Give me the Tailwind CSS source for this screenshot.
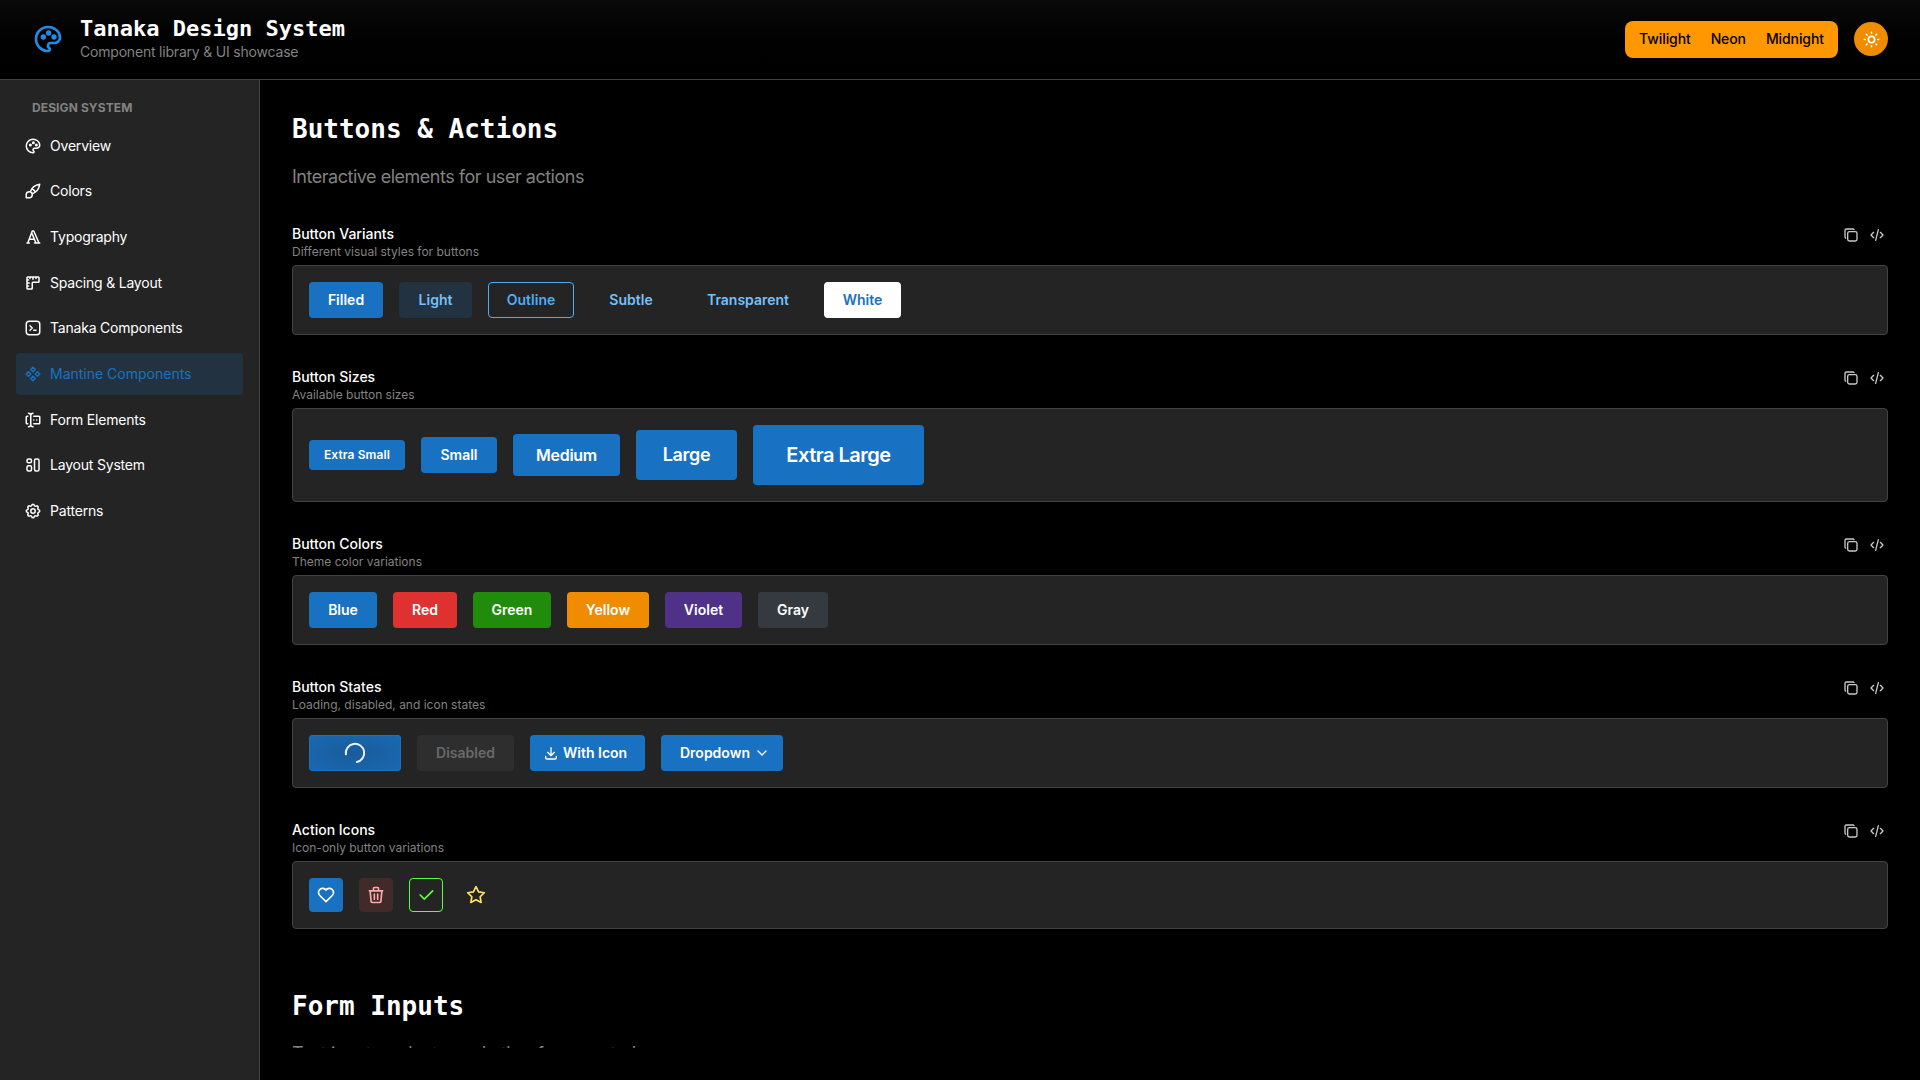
<!DOCTYPE html>
<html lang="en">
<head>
<meta charset="utf-8">
<title>Tanaka Design System</title>
<script src="https://cdn.jsdelivr.net/npm/@tailwindcss/browser@4"></script>
</head>
<body class="h-screen overflow-hidden bg-black text-white font-['Inter',sans-serif] antialiased">
<svg class="hidden">
  <defs>
    <symbol id="palette" viewBox="0 0 24 24"><path d="M12 21a9 9 0 0 1 0 -18c4.97 0 9 3.582 9 8c0 1.06 -.474 2.078 -1.318 2.828c-.844 .75 -1.989 1.172 -3.182 1.172h-2.5a2 2 0 0 0 -1 3.75a1.3 1.3 0 0 1 -1 2.25"/><path d="M7.5 10.5a1 1 0 1 0 2 0a1 1 0 1 0 -2 0M11.500 7.5a1 1 0 1 0 2 0a1 1 0 1 0 -2 0M15.500 10.5a1 1 0 1 0 2 0a1 1 0 1 0 -2 0"/></symbol>
    <symbol id="brush" viewBox="0 0 24 24"><path d="M3 21v-4a4 4 0 1 1 4 4h-4M21 3a16 16 0 0 0 -12.8 10.2M21 3a16 16 0 0 1 -10.2 12.8M10.6 9a9 9 0 0 1 4.4 4.4"/></symbol>
    <symbol id="typography" viewBox="0 0 24 24"><path d="M4 20h3M14 20h7M6.900 15h6.900M10.200 6.300l5.800 13.700M5 20l6 -16h2l7 16"/></symbol>
    <symbol id="ruler" viewBox="0 0 24 24"><path d="M5 4h14a1 1 0 0 1 1 1v5a1 1 0 0 1 -1 1h-7a1 1 0 0 0 -1 1v7a1 1 0 0 1 -1 1h-5a1 1 0 0 1 -1 -1v-14a1 1 0 0 1 1 -1M4 8h2M4 12h3M4 16h2M8 4v2M12 4v3M16 4v2"/></symbol>
    <symbol id="terminal" viewBox="0 0 24 24"><path d="M7 3h10a4 4 0 0 1 4 4v10a4 4 0 0 1 -4 4h-10a4 4 0 0 1 -4 -4v-10a4 4 0 0 1 4 -4zM8 9l3 3l-3 3M13 15h3"/></symbol>
    <symbol id="components" viewBox="0 0 24 24"><path d="M3 12l3 3l3 -3l-3 -3zM15 12l3 3l3 -3l-3 -3zM9 6l3 3l3 -3l-3 -3zM9 18l3 3l3 -3l-3 -3z"/></symbol>
    <symbol id="forms" viewBox="0 0 24 24"><path d="M12 3a3 3 0 0 0 -3 3v12a3 3 0 0 0 3 3M6 3a3 3 0 0 1 3 3v12a3 3 0 0 1 -3 3M13 7h7a1 1 0 0 1 1 1v8a1 1 0 0 1 -1 1h-7M5 7h-1a1 1 0 0 0 -1 1v8a1 1 0 0 0 1 1h1M17 12h.01M13 12h.01"/></symbol>
    <symbol id="layout" viewBox="0 0 24 24"><path d="M4 6a2 2 0 0 1 2 -2h2a2 2 0 0 1 2 2v1a2 2 0 0 1 -2 2h-2a2 2 0 0 1 -2 -2zM4 15a2 2 0 0 1 2 -2h2a2 2 0 0 1 2 2v3a2 2 0 0 1 -2 2h-2a2 2 0 0 1 -2 -2zM14 6a2 2 0 0 1 2 -2h2a2 2 0 0 1 2 2v12a2 2 0 0 1 -2 2h-2a2 2 0 0 1 -2 -2z"/></symbol>
    <symbol id="settings" viewBox="0 0 24 24"><path d="M10.325 4.317c.426 -1.756 2.924 -1.756 3.350 0a1.724 1.724 0 0 0 2.573 1.066c1.543 -.94 3.310 .826 2.370 2.370a1.724 1.724 0 0 0 1.065 2.572c1.756 .426 1.756 2.924 0 3.350a1.724 1.724 0 0 0 -1.066 2.573c.94 1.543 -.826 3.310 -2.370 2.370a1.724 1.724 0 0 0 -2.572 1.065c-.426 1.756 -2.924 1.756 -3.350 0a1.724 1.724 0 0 0 -2.573 -1.066c-1.543 .94 -3.310 -.826 -2.370 -2.370a1.724 1.724 0 0 0 -1.065 -2.572c-1.756 -.426 -1.756 -2.924 0 -3.350a1.724 1.724 0 0 0 1.066 -2.573c-.94 -1.543 .826 -3.310 2.370 -2.370c1 .608 2.296 .07 2.572 -1.065z"/><path d="M9 12a3 3 0 1 0 6 0a3 3 0 0 0 -6 0"/></symbol>
    <symbol id="sun" viewBox="0 0 24 24"><path d="M8 12a4 4 0 1 0 8 0a4 4 0 1 0 -8 0M3 12h1M12 3v1M20 12h1M12 20v1M5.600 5.600l.7 .7M18.400 5.600l-.7 .7M17.700 17.700l.7 .7M6.300 17.700l-.7 .7"/></symbol>
    <symbol id="copy" viewBox="0 0 24 24"><path d="M7 9.667a2.667 2.667 0 0 1 2.667 -2.667h8.666a2.667 2.667 0 0 1 2.667 2.667v8.666a2.667 2.667 0 0 1 -2.667 2.667h-8.666a2.667 2.667 0 0 1 -2.667 -2.667zM4.012 16.737a2.005 2.005 0 0 1 -1.012 -1.737v-10c0 -1.100 .9 -2 2 -2h10c.75 0 1.158 .385 1.500 1"/></symbol>
    <symbol id="code" viewBox="0 0 24 24"><path d="M7 8l-4 4l4 4M17 8l4 4l-4 4M14 4l-4 16"/></symbol>
    <symbol id="download" viewBox="0 0 24 24"><path d="M4 17v2a2 2 0 0 0 2 2h12a2 2 0 0 0 2 -2v-2M7 11l5 5l5 -5M12 4v12"/></symbol>
    <symbol id="chevron" viewBox="0 0 24 24"><path d="M6 9l6 6l6 -6"/></symbol>
    <symbol id="heart" viewBox="0 0 24 24"><path d="M19.500 12.572l-7.500 7.428l-7.500 -7.428a5 5 0 1 1 7.500 -6.566a5 5 0 1 1 7.500 6.572"/></symbol>
    <symbol id="trash" viewBox="0 0 24 24"><path d="M4 7h16M10 11v6M14 11v6M5 7l1 12a2 2 0 0 0 2 2h8a2 2 0 0 0 2 -2l1 -12M9 7v-3a1 1 0 0 1 1 -1h4a1 1 0 0 1 1 1v3"/></symbol>
    <symbol id="check" viewBox="0 0 24 24"><path d="M5 12l5 5l10 -10"/></symbol>
    <symbol id="star" viewBox="0 0 24 24"><path d="M12 17.750l-6.172 3.245l1.179 -6.873l-5 -4.867l6.900 -1l3.086 -6.253l3.086 6.253l6.900 1l-5 4.867l1.179 6.873z"/></symbol>
  </defs>
</svg>

<div class="flex h-full flex-col">
  <header class="flex h-20 shrink-0 items-center justify-between border-b border-[#424242] bg-linear-to-b from-[#0b0b0b] to-black px-8 pb-px">
    <div class="flex items-center gap-4">
      <svg class="size-8 fill-none stroke-[#228be6] stroke-2 [stroke-linecap:round] [stroke-linejoin:round]"><use href="#palette"/></svg>
      <div>
        <h1 class="font-['DejaVu_Sans_Mono',monospace] text-[22px] leading-[27px] font-bold">Tanaka Design System</h1>
        <p class="pb-px text-sm leading-[20px] tracking-[-0.2px] text-[#828282]">Component library &amp; UI showcase</p>
      </div>
    </div>
    <div class="flex items-center gap-4">
      <div class="flex h-[37px] w-[213px] items-center justify-center rounded-lg bg-[#ff9800] text-sm font-medium tracking-[-0.1px] text-black">
        <span class="px-[10px]">Twilight</span><span class="px-[10px]">Neon</span><span class="px-[10px]">Midnight</span>
      </div>
      <button class="grid size-[34px] place-items-center rounded-full bg-[#f08c00]"><svg class="size-[19px] fill-none stroke-white stroke-2 [stroke-linecap:round] [stroke-linejoin:round]"><use href="#sun"/></svg></button>
    </div>
  </header>

  <div class="flex min-h-0 flex-1">
    <aside class="w-[260px] shrink-0 border-r border-[#424242] bg-[#242424] p-4">
      <p class="h-[28.700px] px-4 pt-[2px] text-xs leading-[19px] font-bold tracking-[0.1px] text-[#828282]">DESIGN SYSTEM</p>
      <nav class="flex flex-col gap-1 text-sm tracking-[-0.2px] *:flex *:h-[41.700px] *:items-center *:gap-2 *:rounded *:px-2 [&_svg]:size-[18px] [&_svg]:fill-none [&_svg]:stroke-current [&_svg]:stroke-2 [&_svg]:[stroke-linecap:round] [&_svg]:[stroke-linejoin:round]">
        <a><svg><use href="#palette"/></svg>Overview</a>
        <a><svg><use href="#brush"/></svg>Colors</a>
        <a><svg><use href="#typography"/></svg>Typography</a>
        <a><svg><use href="#ruler"/></svg>Spacing &amp; Layout</a>
        <a><svg><use href="#terminal"/></svg>Tanaka Components</a>
        <a class="bg-[#233240] tracking-normal text-[#1971c2]"><svg><use href="#components"/></svg>Mantine Components</a>
        <a><svg><use href="#forms"/></svg>Form Elements</a>
        <a><svg><use href="#layout"/></svg>Layout System</a>
        <a><svg><use href="#settings"/></svg>Patterns</a>
      </nav>
    </aside>

    <main class="min-w-0 flex-1 p-8">
      <div class="h-full overflow-hidden">
        <h2 class="h-[35px] font-['DejaVu_Sans_Mono',monospace] text-[26px] leading-[35px] font-bold">Buttons &amp; Actions</h2>
        <p class="mt-[15px] mb-px h-[29px] text-lg leading-[29px] tracking-[-0.480px] text-[#828282]">Interactive elements for user actions</p>

        <div id="sections"></div>

        <h2 class="mt-[60px] h-[35px] font-['DejaVu_Sans_Mono',monospace] text-[26px] leading-[35px] font-bold">Form Inputs</h2>
        <p class="mt-[15px] h-[29px] text-lg leading-[29px] tracking-[-0.480px] text-[#828282]">Text inputs, selects, and other form controls</p>
      </div>
    </main>
  </div>
</div>

<template id="bodies">
  <div data-title="Button Variants" data-sub="Different visual styles for buttons">
    <button class="h-9 w-[74px] rounded bg-[#1971c2]">Filled</button>
    <button class="h-9 w-[73px] rounded bg-[#233240] text-[#74c0fc]">Light</button>
    <button class="h-9 w-[86px] rounded border border-[#4dabf7] text-[#4dabf7]">Outline</button>
    <button class="h-9 w-[82px] rounded text-[#74c0fc]">Subtle</button>
    <button class="h-9 w-[120px] rounded text-[#74c0fc]">Transparent</button>
    <button class="h-9 w-[77px] rounded bg-white text-[#1971c2]">White</button>
  </div>
  <div data-title="Button Sizes" data-sub="Available button sizes">
    <button class="h-[30px] w-24 rounded bg-[#1971c2] text-xs tracking-[0.1px]">Extra Small</button>
    <button class="h-9 w-[76px] rounded bg-[#1971c2]">Small</button>
    <button class="h-[42px] w-[107px] rounded bg-[#1971c2] text-base tracking-[-0.3px]">Medium</button>
    <button class="h-[50px] w-[101px] rounded bg-[#1971c2] text-lg tracking-[-0.350px]">Large</button>
    <button class="h-[60px] w-[171px] rounded bg-[#1971c2] text-xl tracking-[-0.5px]">Extra Large</button>
  </div>
  <div data-title="Button Colors" data-sub="Theme color variations">
    <button class="h-9 w-[68px] rounded bg-[#1971c2]">Blue</button>
    <button class="h-9 w-[64px] rounded bg-[#e03131]">Red</button>
    <button class="h-9 w-[78px] rounded bg-[#218c0c]">Green</button>
    <button class="h-9 w-[82px] rounded bg-[#f08c00]">Yellow</button>
    <button class="h-9 w-[77px] rounded bg-[#4f3288]">Violet</button>
    <button class="h-9 w-[70px] rounded bg-[#343a40]">Gray</button>
  </div>
  <div data-title="Button States" data-sub="Loading, disabled, and icon states">
    <button class="grid h-9 w-[92px] place-items-center rounded bg-radial from-[#195c9b] to-[#1969b3] inset-ring inset-ring-[#1971c2]"><svg class="size-[22px] fill-none stroke-[#e8f1f9] stroke-2 [stroke-linecap:round]" viewBox="0 0 22 22"><path d="M1.900 12.300A9.200 9.200 0 1 1 12.800 20"/></svg></button>
    <button class="h-9 w-[97px] rounded bg-[#2e2e2e] text-[#696969]">Disabled</button>
    <button class="flex h-9 w-[115px] items-center gap-1 rounded bg-[#1971c2] pl-[13px] whitespace-nowrap"><svg class="size-4 shrink-0 fill-none stroke-white stroke-2 [stroke-linecap:round] [stroke-linejoin:round]"><use href="#download"/></svg>With Icon</button>
    <button class="flex h-9 w-[122px] items-center justify-between rounded bg-[#1971c2] pr-[13px] pl-[19px] whitespace-nowrap">Dropdown<svg class="size-4 shrink-0 fill-none stroke-white stroke-2 [stroke-linecap:round] [stroke-linejoin:round]"><use href="#chevron"/></svg></button>
  </div>
  <div data-title="Action Icons" data-sub="Icon-only button variations">
    <button class="grid size-[34px] place-items-center rounded bg-[#1971c2]"><svg class="size-5 fill-none stroke-white stroke-2 [stroke-linecap:round] [stroke-linejoin:round]"><use href="#heart"/></svg></button>
    <button class="grid size-[34px] place-items-center rounded bg-[#412a2a]"><svg class="size-5 fill-none stroke-[#ffa8a8] stroke-2 [stroke-linecap:round] [stroke-linejoin:round]"><use href="#trash"/></svg></button>
    <button class="grid size-[34px] place-items-center rounded border border-[#5cff3b]"><svg class="size-5 fill-none stroke-[#5cff3b] stroke-2 [stroke-linecap:round] [stroke-linejoin:round]"><use href="#check"/></svg></button>
    <button class="grid size-[34px] place-items-center rounded"><svg class="size-5 fill-none stroke-[#ffe066] stroke-2 [stroke-linecap:round] [stroke-linejoin:round]"><use href="#star"/></svg></button>
  </div>
</template>
<script>
const root = document.getElementById('sections');
for (const b of [...document.getElementById('bodies').content.children]) {
  const s = document.createElement('section');
  s.innerHTML = `<div class="flex h-[73px] items-start justify-between pt-[31px]">
      <div><h3 class="text-sm leading-[22px] font-medium">${b.dataset.title}</h3><p class="-mt-[2px] text-xs leading-[18px] text-[#828282]">${b.dataset.sub}</p></div>
      <div class="flex gap-1 pt-[1px] [&_svg]:size-4 [&_svg]:fill-none [&_svg]:stroke-[#c9c9c9] [&_svg]:stroke-2 [&_svg]:[stroke-linecap:round] [&_svg]:[stroke-linejoin:round]">
        <button class="grid size-[22px] place-items-center"><svg><use href="#copy"/></svg></button>
        <button class="grid size-[22px] place-items-center"><svg><use href="#code"/></svg></button>
      </div></div>`;
  b.className = 'flex items-center gap-4 rounded border border-[#424242] bg-[#242424] p-4 text-sm font-semibold';
  s.append(b);
  root.append(s);
}
</script>
</body>
</html>
